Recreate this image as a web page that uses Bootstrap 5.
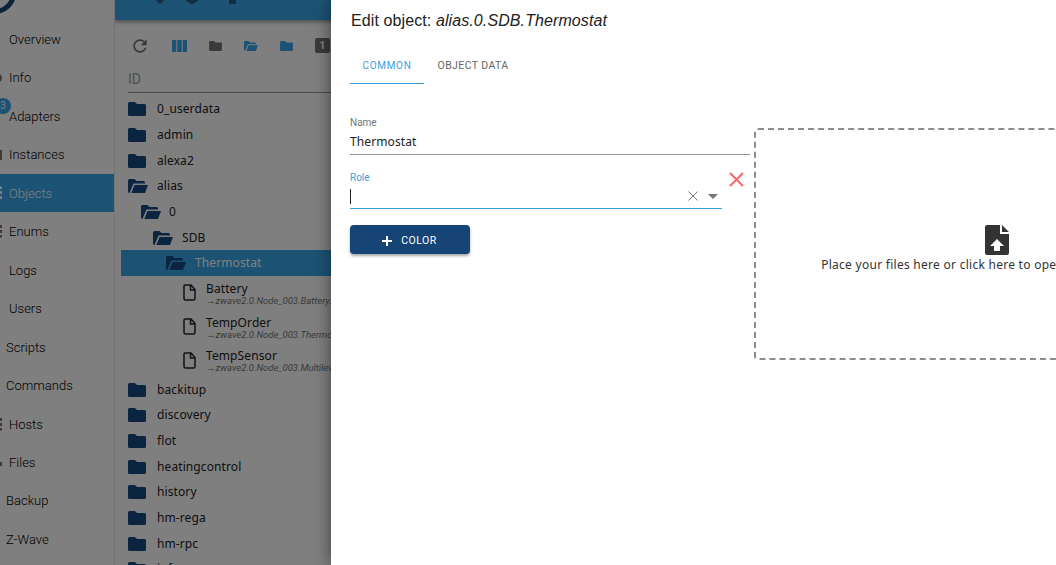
<!DOCTYPE html>
<html lang="en">
<head>
<meta charset="UTF-8">
<title>Edit object</title>
<link rel="stylesheet" href="https://cdn.jsdelivr.net/npm/bootstrap@5.3.3/dist/css/bootstrap.min.css">
<script src="https://cdn.jsdelivr.net/npm/bootstrap@5.3.3/dist/js/bootstrap.bundle.min.js"></script>
<style>
html, body { height: 565px; overflow: hidden; }
body { background: #fff; font-family: "Noto Sans", sans-serif; color: #212121; }
.app-shell { height: 565px; }
.side-nav { width: 115px; flex: none; padding-top: 20px; border-right: 1px solid #e4e4e4; position: relative; overflow: hidden; }
.side-item { height: 38.46px; position: relative; font-family: Roboto, sans-serif; font-size: 13px; font-weight: 300; padding: 1px 0 0 9px; color: #000; }
.side-item.shift { padding-left: 6px; }
.side-item.chosen { background: #38a6e8; color: #fff; }
.side-logo { position: absolute; left: -26px; top: -28px; width: 42px; height: 42px; border: 5px solid #164477; border-radius: 50%; }
.side-badge { position: absolute; left: -5px; top: 98px; width: 16px; height: 16px; border-radius: 50%; background: #38a6e8; color: #fff; font-size: 10px; line-height: 16px; text-align: center; font-family: Roboto, sans-serif; }
.peek { position: absolute; left: 0; top: 50%; transform: translateY(-50%); width: 2px; background: #777; }
.peek-round { left: -6px; width: 8px; height: 8px; border-radius: 50%; }
.peek-low { height: 4px; margin-top: 2px; }
.peek-bar { height: 10px; }
.peek-dash { height: 13px; background: repeating-linear-gradient(#777 0 3px, transparent 3px 5px); }
.chosen .peek-dash { background: repeating-linear-gradient(#fff 0 3px, transparent 3px 5px); }
.main-area { min-width: 0; overflow: hidden; }
.top-strip { height: 20px; background: #38a6e8; box-shadow: 0 2px 4px rgba(0,0,0,.4); padding-left: 41px; gap: 21px; position: relative; }
.strip-mark { display: block; }
.strip-far { margin-left: 9px; }
.tool-row { height: 51px; padding-left: 15px; gap: 22px; }
.count-box { width: 15px; height: 15px; border-radius: 2px; background: #757575; color: #fff; font-family: Roboto, sans-serif; font-size: 11px; font-weight: 700; line-height: 15px; text-align: center; }
.id-head { margin-left: 13px; height: 22px; border-bottom: 1px solid #949494; color: #9e9e9e; font-family: Roboto, sans-serif; font-size: 14px; line-height: 17px; }
.tree-box { font-size: 12px; letter-spacing: .1px; padding-top: 3.6px; }
.tree-row { height: 25.64px; padding-left: 13px; gap: 11px; color: #212121; white-space: nowrap; }
.tree-row.open-row { gap: 9px; }
.tree-row.lvl1 { padding-left: 26px; gap: 8px; }
.tree-row.lvl2 { padding-left: 38px; gap: 9px; }
.tree-row.lvl3 { margin-left: 6px; padding-left: 45px; gap: 9px; background: #38a6e8; color: #fff; }
.state-row { height: 33.7px; padding-left: 68px; gap: 10px; white-space: nowrap; }
.state-text { padding-top: 2px; }
.state-name { font-size: 12px; line-height: 13px; }
.state-link { font-size: 9.5px; letter-spacing: 0; font-style: italic; color: #757575; line-height: 11px; font-family: Roboto, sans-serif; }
.dim-layer { position: absolute; inset: 0; background: rgba(0,0,0,.5); }
.edit-panel { position: absolute; left: 331px; top: 0; bottom: 0; right: 0; overflow: hidden; background: #fff; box-shadow: 0 0 16px rgba(0,0,0,.5); padding-left: 19px; }
.edit-title { font-family: "Liberation Sans", sans-serif; font-size: 16px; letter-spacing: .1px; line-height: 20px; padding: 11px 0 0 1px; height: 42px; color: #212121; }
.tab-bar { height: 42px; }
.tab-one { width: 74px; height: 42px; border-bottom: 1px solid #3a9fd8; color: #3a9fd8; font-family: Roboto, sans-serif; font-size: 10px; letter-spacing: .7px; text-align: center; line-height: 47px; }
.tab-two { width: 98px; color: #666; font-family: Roboto, sans-serif; font-size: 10.5px; letter-spacing: .4px; text-align: center; line-height: 47px; }
.form-side { width: 400px; flex: none; padding-top: 33px; }
.fld-label { font-family: Roboto, sans-serif; font-size: 10px; line-height: 12px; color: #757575; }
.fld-label.on { color: #3a9fd8; margin-top: 17px; }
.fld-name { font-size: 12px; letter-spacing: .1px; line-height: 18px; padding-top: 4px; border-bottom: 1px solid #949494; height: 26px; }
.role-box { width: 372px; flex: none; }
.fld-role { height: 25px; border-bottom: 1px solid #3a9fd8; padding-right: 4px; gap: 10px; }
.caret-bar { width: 1px; height: 15px; background: #212121; }
.del-icon { margin: 17px 0 0 7px; }
.color-btn { width: 120px; height: 29px; margin-top: 16px; padding: 2px 1px 0 0; background: #164477; color: #fff; border: 0; border-radius: 4px; box-shadow: 0 2px 3px rgba(0,0,0,.35); font-family: Roboto, sans-serif; font-size: 10.5px; letter-spacing: .5px; gap: 9px; }
.color-btn:hover { background: #164477; color: #fff; }
.drop-zone { width: 486px; height: 232px; margin: 44px 0 0 4px; padding-top: 10px; border: 2px dashed #8c8c8c; border-radius: 4px; color: #333; font-size: 12px; letter-spacing: .27px; flex: none; white-space: nowrap; }
.drop-text { margin-top: 1px; }
</style>
</head>
<body>
<svg width="0" height="0" class="position-absolute">
  <symbol id="ic-folder" viewBox="0 0 18 14"><path d="M1.500 0h5.500l2 2h7.500A1.500 1.500 0 0 1 18 3.500v9a1.500 1.500 0 0 1-1.500 1.500h-15A1.500 1.500 0 0 1 0 12.500v-11A1.500 1.500 0 0 1 1.500 0z"/></symbol>
  <symbol id="ic-open" viewBox="0 0 20 14"><path d="M1.500 0h5l2 2h7a1.500 1.500 0 0 1 1.500 1.500V4.500H5.500L2.500 11.500 1.500 14A1.500 1.500 0 0 1 0 12.500v-11A1.500 1.500 0 0 1 1.500 0zM6.500 6H20l-3 8H3.300z"/></symbol>
  <symbol id="ic-file" viewBox="0 0 13 17"><path d="M2 1h6l4 4.500V14.500a1.500 1.500 0 0 1-1.500 1.500H2.500A1.500 1.500 0 0 1 1 14.500V2a1 1 0 0 1 1-1zM7.500 1v5H12" fill="none" stroke="currentColor" stroke-width="1.500"/></symbol>
</svg>
<div class="app-shell d-flex">
  <div class="side-nav">
    <div class="side-logo"></div>
    <div class="side-item d-flex align-items-center">Overview</div>
    <div class="side-item d-flex align-items-center"><span class="peek peek-round"></span>Info</div>
    <div class="side-item d-flex align-items-center">Adapters</div>
    <div class="side-item d-flex align-items-center"><span class="peek peek-bar"></span>Instances</div>
    <div class="side-item chosen d-flex align-items-center"><span class="peek peek-dash"></span>Objects</div>
    <div class="side-item d-flex align-items-center"><span class="peek peek-dash"></span>Enums</div>
    <div class="side-item d-flex align-items-center">Logs</div>
    <div class="side-item d-flex align-items-center">Users</div>
    <div class="side-item shift d-flex align-items-center">Scripts</div>
    <div class="side-item shift d-flex align-items-center">Commands</div>
    <div class="side-item d-flex align-items-center"><span class="peek peek-dash"></span>Hosts</div>
    <div class="side-item d-flex align-items-center"><span class="peek peek-low"></span>Files</div>
    <div class="side-item shift d-flex align-items-center">Backup</div>
    <div class="side-item shift d-flex align-items-center">Z-Wave</div>
    <div class="side-badge">3</div>
  </div>
  <div class="main-area flex-grow-1">
    <div class="top-strip d-flex align-items-start">
      <svg class="strip-mark" width="8" height="4" fill="#26587e"><path d="M0 0h8L4 4z"/></svg>
      <svg class="strip-mark" width="14" height="4" fill="#26587e"><path d="M0 0h14L8 4H6z"/></svg>
      <svg class="strip-mark strip-far" width="7" height="4" fill="#26587e"><path d="M0 0h7v4H0z"/></svg>
    </div>
    <div class="tool-row d-flex align-items-center">
      <svg width="20" height="20" viewBox="0 0 24 24" fill="#757575"><path d="M17.65 6.35C16.2 4.9 14.21 4 12 4c-4.42 0-7.99 3.58-7.99 8s3.570 8 7.990 8c3.730 0 6.840-2.550 7.730-6h-2.080c-.82 2.330-3.040 4-5.650 4-3.310 0-6-2.690-6-6s2.690-6 6-6c1.660 0 3.140.69 4.220 1.780L13 11h7V4l-2.350 2.350z"/></svg>
      <svg width="15" height="12" fill="#38a6e8"><path d="M0 0h4.300v12H0zM5.300 0h4.400v12H5.300zM10.700 0H15v12h-4.300z"/></svg>
      <svg width="13" height="10" fill="#757575"><use href="#ic-folder"/></svg>
      <svg width="14" height="10" fill="#38a6e8"><use href="#ic-open"/></svg>
      <svg width="13" height="10" fill="#38a6e8"><use href="#ic-folder"/></svg>
      <div class="count-box">1</div>
    </div>
    <div class="id-head">ID</div>
    <div class="tree-box">
      <div class="tree-row d-flex align-items-center"><svg width="18" height="14" fill="#164a80"><use href="#ic-folder"/></svg>0_userdata</div>
      <div class="tree-row d-flex align-items-center"><svg width="18" height="14" fill="#164a80"><use href="#ic-folder"/></svg>admin</div>
      <div class="tree-row d-flex align-items-center"><svg width="18" height="14" fill="#164a80"><use href="#ic-folder"/></svg>alexa2</div>
      <div class="tree-row open-row d-flex align-items-center"><svg width="20" height="14" fill="#164a80"><use href="#ic-open"/></svg>alias</div>
      <div class="tree-row lvl1 d-flex align-items-center"><svg width="20" height="14" fill="#164a80"><use href="#ic-open"/></svg>0</div>
      <div class="tree-row lvl2 d-flex align-items-center"><svg width="20" height="14" fill="#164a80"><use href="#ic-open"/></svg>SDB</div>
      <div class="tree-row lvl3 d-flex align-items-center"><svg width="20" height="14" fill="#164a80"><use href="#ic-open"/></svg>Thermostat</div>
      <div class="state-row d-flex align-items-center"><svg width="13" height="17" class="text-dark"><use href="#ic-file"/></svg><div class="state-text"><div class="state-name">Battery</div><div class="state-link">→zwave2.0.Node_003.Battery.isLow</div></div></div>
      <div class="state-row d-flex align-items-center"><svg width="13" height="17" class="text-dark"><use href="#ic-file"/></svg><div class="state-text"><div class="state-name">TempOrder</div><div class="state-link">→zwave2.0.Node_003.Thermostat_Setpoint</div></div></div>
      <div class="state-row d-flex align-items-center"><svg width="13" height="17" class="text-dark"><use href="#ic-file"/></svg><div class="state-text"><div class="state-name">TempSensor</div><div class="state-link">→zwave2.0.Node_003.Multilevel_Sensor</div></div></div>
      <div class="tree-row d-flex align-items-center"><svg width="18" height="14" fill="#164a80"><use href="#ic-folder"/></svg>backitup</div>
      <div class="tree-row d-flex align-items-center"><svg width="18" height="14" fill="#164a80"><use href="#ic-folder"/></svg>discovery</div>
      <div class="tree-row d-flex align-items-center"><svg width="18" height="14" fill="#164a80"><use href="#ic-folder"/></svg>flot</div>
      <div class="tree-row d-flex align-items-center"><svg width="18" height="14" fill="#164a80"><use href="#ic-folder"/></svg>heatingcontrol</div>
      <div class="tree-row d-flex align-items-center"><svg width="18" height="14" fill="#164a80"><use href="#ic-folder"/></svg>history</div>
      <div class="tree-row d-flex align-items-center"><svg width="18" height="14" fill="#164a80"><use href="#ic-folder"/></svg>hm-rega</div>
      <div class="tree-row d-flex align-items-center"><svg width="18" height="14" fill="#164a80"><use href="#ic-folder"/></svg>hm-rpc</div>
      <div class="tree-row d-flex align-items-center"><svg width="18" height="14" fill="#164a80"><use href="#ic-folder"/></svg>info</div>
    </div>
  </div>
</div>
<div class="dim-layer"></div>
<div class="edit-panel">
  <div class="edit-title">Edit object: <i>alias.0.SDB.Thermostat</i></div>
  <div class="tab-bar d-flex"><div class="tab-one">COMMON</div><div class="tab-two">OBJECT DATA</div></div>
  <div class="d-flex">
    <div class="form-side">
      <div class="fld-label">Name</div>
      <div class="fld-name">Thermostat</div>
      <div class="d-flex">
        <div class="role-box">
          <div class="fld-label on">Role</div>
          <div class="fld-role d-flex align-items-center">
            <span class="caret-bar me-auto"></span>
            <svg width="10" height="10" stroke="#757575" stroke-width="1"><path d="M.5.5l9 9M9.500.5l-9 9"/></svg>
            <svg width="10" height="5" fill="#757575"><path d="M0 0h10L5 5z"/></svg>
          </div>
        </div>
        <svg class="del-icon" width="15" height="15" stroke="#ff6666" stroke-width="2"><path d="M1 1l13 13M14 1L1 14"/></svg>
      </div>
      <button type="button" class="btn color-btn d-flex align-items-center justify-content-center"><svg width="10" height="10" stroke="#fff" stroke-width="2"><path d="M5 0v10M0 5h10"/></svg>COLOR</button>
    </div>
    <div class="drop-zone d-flex flex-column align-items-center justify-content-center">
      <svg width="24" height="30" viewBox="0 0 24 30" fill="#333"><path d="M2 0h13v9h9v19a2 2 0 0 1-2 2H2a2 2 0 0 1-2-2V2a2 2 0 0 1 2-2zM17 0l7 7h-7zM12 14l-7 7h4v5h6v-5h4z" fill-rule="evenodd"/></svg>
      <div class="drop-text">Place your files here or click here to open the browse dialog</div>
    </div>
  </div>
</div>
</body>
</html>
